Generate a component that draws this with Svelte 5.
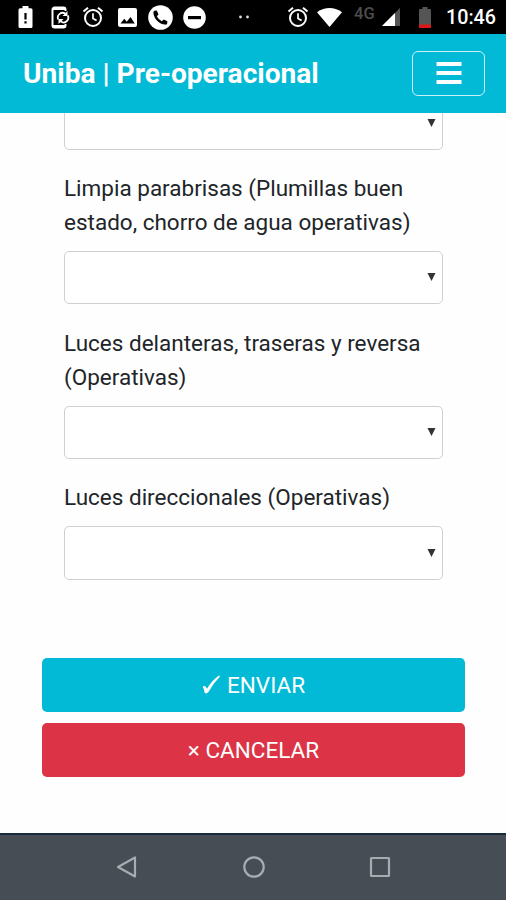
<script>
let fields = $state([
    { label: '', value: '' },
    { label: 'Limpia parabrisas (Plumillas buen estado, chorro de agua operativas)', value: '' },
    { label: 'Luces delanteras, traseras y reversa (Operativas)', value: '' },
    { label: 'Luces direccionales (Operativas)', value: '' }
]);

function handleCancel() {
    fields.forEach((field) => (field.value = ''));
}
</script>

{#snippet alarm()}
    <svg class="alarm" width="22" height="22" viewBox="0 0 22 22" fill="none" stroke="#fff">
        <circle cx="11" cy="12" r="8" stroke-width="2" />
        <path d="M11 7.2v5.2l3.6 2.2" stroke-width="1.7" />
        <path d="M1.5 5.6 6 1.8M20.5 5.6 16 1.8" stroke-width="2" />
    </svg>
{/snippet}

<div class="screen">
    <div class="status-bar">
        <svg class="battery-alert" width="15" height="22" viewBox="0 0 15 22">
            <path d="M4.5 0h6v2.2H13a1.5 1.5 0 0 1 1.5 1.5v16.8A1.5 1.5 0 0 1 13 22H2a1.5 1.5 0 0 1-1.5-1.5V3.7A1.5 1.5 0 0 1 2 2.2h2.5z" fill="#fff" />
            <path d="M6.4 7h2.2v6.5H6.4zM6.4 15.2h2.2v2.4H6.4z" fill="#000" />
        </svg>
        <svg class="phone-sync" width="19" height="23" viewBox="0 0 19 23" fill="none" stroke="#fff">
            <path d="M14.5 5V3.5a2 2 0 0 0-2-2h-9a2 2 0 0 0-2 2v16a2 2 0 0 0 2 2h9a2 2 0 0 0 2-2V18" stroke-width="2" />
            <path d="M2 3h12M2 20h12" stroke-width="2" />
            <path d="M7.2 13.5A4.8 4.8 0 0 1 14.5 7.8M16.8 9.5A4.8 4.8 0 0 1 9.8 15.6" stroke-width="1.8" />
            <path d="M16.5 5v5h-5zM7.5 18v-5h5z" fill="#fff" stroke="none" />
        </svg>
        {@render alarm()}
        <svg class="image" width="19" height="19" viewBox="0 0 19 19">
            <rect width="19" height="19" rx="2" fill="#fff" />
            <path d="M2.5 15.5 6.3 10.7l2.5 3 3.7-4.7 4.3 6.5z" fill="#000" />
        </svg>
        <svg class="call" width="25" height="25" viewBox="0 0 25 25">
            <circle cx="12.5" cy="12.5" r="12.3" fill="#fff" />
            <path d="M6.3 5.8 8.8 5.5 10.5 9.4 8.8 11.2a11 11 0 0 0 5 5l1.9-1.7 3.7 1.7-.3 2.6q-.5 1-2 .8C11 19 6 14 5.4 8q0-1.6.9-2.2z" fill="#000" />
        </svg>
        <svg class="dnd" width="23" height="23" viewBox="0 0 23 23">
            <circle cx="11.5" cy="11.5" r="11.3" fill="#fff" />
            <rect x="5" y="10" width="13" height="3.2" fill="#000" />
        </svg>
        <svg class="dots" width="12" height="4" viewBox="0 0 12 4" fill="#ddd">
            <circle cx="2.5" cy="2" r="1.4" />
            <circle cx="9.5" cy="2" r="1.4" />
        </svg>
        <div class="status-right">
            {@render alarm()}
            <svg class="wifi" width="25" height="19" viewBox="0 0 25 19">
                <path d="M0 4.2Q12.5-4 25 4.2L12.5 19z" fill="#fff" />
            </svg>
            <span class="network">4G</span>
            <svg class="signal" width="18" height="18" viewBox="0 0 18 18">
                <path d="M0 18 18 0v18z" fill="#555" />
                <path d="M0 18 13 5v13z" fill="#fff" />
            </svg>
            <svg class="battery" width="12" height="21" viewBox="0 0 12 21">
                <path d="M3.5 0h5v2H11q1 0 1 1v17q0 1-1 1H1q-1 0-1-1V3q0-1 1-1h2.5z" fill="#555" />
                <path d="M0 17.5h12V20q0 1-1 1H1q-1 0-1-1z" fill="#dc1717" />
            </svg>
            <span class="time">10:46</span>
        </div>
    </div>

    <header>
        <h1>Uniba | Pre-operacional</h1>
        <button class="menu-btn" aria-label="Menu">
            <svg width="26" height="24" viewBox="0 0 26 24" fill="#fff">
                <rect x="0.5" y="1" width="25" height="4" />
                <rect x="0.5" y="10" width="25" height="4" />
                <rect x="0.5" y="19" width="25" height="4" />
            </svg>
        </button>
    </header>

    <main>
        <div class="fields">
            {#each fields as field, i}
                <div class="form-group">
                    {#if field.label}
                        <label for="field-{i}">{field.label}</label>
                    {/if}
                    <div class="select-box">
                        <select id="field-{i}" bind:value={field.value}>
                            <option value=""></option>
                            <option value="si">Si</option>
                            <option value="no">No</option>
                        </select>
                        <svg class="arrow" width="9" height="8" viewBox="0 0 9 8">
                            <path d="M0.5 0h8L4.5 8z" fill="#333" />
                        </svg>
                    </div>
                </div>
            {/each}
        </div>

        <div class="actions">
            <button class="btn submit">
                <svg width="19" height="20" viewBox="0 0 19 20">
                    <path d="M.7 11.7q2.5-2 4.3 2Q10 5.5 17 .6l1 .9Q11 8.5 6.3 17.3q-2 2-3.6.5Q2.2 14 .7 11.7z" fill="#fff" />
                </svg>
                <span>ENVIAR</span>
            </button>
            <button class="btn cancel" onclick={handleCancel}>
                <span>× CANCELAR</span>
            </button>
        </div>
    </main>

    <nav>
        <svg width="22" height="24" viewBox="0 0 22 24">
            <path d="M2 12 19 2.5v19z" />
        </svg>
        <svg width="22" height="24" viewBox="0 0 22 24">
            <circle cx="11" cy="12" r="9.7" />
        </svg>
        <svg width="22" height="24" viewBox="0 0 22 24">
            <rect x="2" y="3" width="18" height="18" rx="0.5" />
        </svg>
    </nav>
</div>

<style>
:global(body) {
    margin: 0;
    background: #fff;
}

.screen {
    display: flex;
    flex-direction: column;
    width: 506px;
    height: 900px;
    overflow: hidden;
    background: #fefefe;
    font-family: Roboto, "Liberation Sans", sans-serif;
    font-size: 22.5px;
    color: #212529;
}

svg {
    display: block;
    flex: none;
}

.status-bar {
    display: flex;
    align-items: center;
    flex: none;
    box-sizing: border-box;
    height: 34px;
    padding: 0 11px 0 18px;
    background: #000;
    color: #fff;
}

.phone-sync {
    margin-left: 18px;
}

.phone-sync + .alarm {
    margin-left: 12px;
}

.image {
    margin-left: 14px;
}

.call {
    margin-left: 11px;
}

.dnd {
    margin-left: 10px;
}

.dots {
    margin-left: 32px;
}

.status-right {
    display: flex;
    align-items: center;
    margin-left: auto;
}

.wifi {
    margin-left: 8px;
}

.network {
    width: 21px;
    margin: 0 7px 6px 12px;
    font-size: 16.5px;
    line-height: 18px;
    font-weight: 500;
    color: #4d4d4d;
}

.battery {
    margin-left: 19px;
}

.time {
    width: 49px;
    margin-left: 15px;
    padding-top: 2px;
    font-size: 19.7px;
    font-weight: 500;
    line-height: 32px;
    white-space: nowrap;
}

header {
    display: flex;
    align-items: center;
    justify-content: space-between;
    flex: none;
    box-sizing: border-box;
    height: 78.5px;
    padding: 0 21px 0 23px;
    background: #02bad6;
}

header h1 {
    margin: 0;
    font-size: 28.1px;
    font-weight: 700;
    color: #fff;
}

.menu-btn {
    display: flex;
    align-items: center;
    justify-content: center;
    width: 73px;
    height: 45px;
    padding: 0;
    background: none;
    border: 1.5px solid #c9f0f6;
    border-radius: 6px;
}

main {
    flex: 1;
    min-height: 0;
    overflow: hidden;
    padding: 0 42px;
}

.fields {
    margin-top: -16.2px;
    padding: 0 22px;
}

.form-group {
    margin-bottom: 22.5px;
}

.form-group label {
    display: block;
    margin-bottom: 11.25px;
    line-height: 33.75px;
}

.select-box {
    position: relative;
}

.select-box select {
    display: block;
    box-sizing: border-box;
    width: 379px;
    height: 53.4px;
    background: #fff;
    border: 1.4px solid #ced0d3;
    border-radius: 5px;
    appearance: none;
    font: inherit;
}

.arrow {
    position: absolute;
    top: 22.5px;
    right: 6.5px;
    pointer-events: none;
}

.actions {
    display: flex;
    flex-direction: column;
    gap: 11.5px;
    margin-top: 78.2px;
}

.btn {
    display: flex;
    align-items: center;
    justify-content: center;
    gap: 6px;
    width: 423px;
    height: 53.5px;
    padding: 0;
    border: none;
    border-radius: 5px;
    font: inherit;
    color: #fff;
}

.submit {
    background: #02bad6;
}

.cancel {
    background: #dc3446;
}

nav {
    display: flex;
    align-items: center;
    justify-content: center;
    gap: 104.5px;
    flex: none;
    box-sizing: border-box;
    height: 67px;
    padding: 0 0 2px 1px;
    border-top: 2px solid #182b3d;
    background: #464d55;
}

nav svg {
    fill: none;
    stroke: #a7acb0;
    stroke-width: 2.2;
    stroke-linejoin: round;
}
</style>
